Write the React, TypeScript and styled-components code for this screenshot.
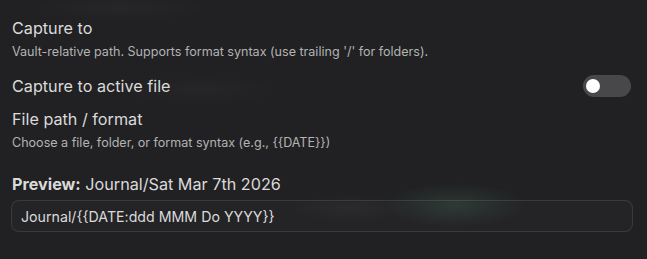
import React, { useState } from "react";
import styled, { createGlobalStyle } from "styled-components";

const Global = createGlobalStyle`
  html, body {
    margin: 0;
    padding: 0;
    background: #212123;
  }
  body {
    font-family: Inter, "Noto Sans", "Liberation Sans", sans-serif;
    -webkit-font-smoothing: antialiased;
  }
`;

const Page = styled.div`
  position: relative;
  width: 647px;
  height: 259px;
  overflow: hidden;
  background:
    radial-gradient(ellipse 70px 22px at 455px 205px, rgba(70, 110, 90, 0.28), rgba(70, 110, 90, 0) 100%),
    radial-gradient(ellipse 60px 14px at 350px 208px, rgba(255, 255, 255, 0.03), rgba(255, 255, 255, 0) 100%),
    radial-gradient(ellipse 80px 14px at 200px 90px, rgba(255, 255, 255, 0.025), rgba(255, 255, 255, 0) 100%),
    radial-gradient(ellipse 90px 14px at 120px 8px, rgba(255, 255, 255, 0.025), rgba(255, 255, 255, 0) 100%),
    #212123;
`;

const Content = styled.div`
  display: flex;
  flex-direction: column;
  padding: 18px 16px 0 12px;
`;

const Setting = styled.div<{ $gap?: number }>`
  display: flex;
  align-items: center;
  justify-content: space-between;
  margin-bottom: ${(p) => p.$gap ?? 0}px;
`;

const Info = styled.div`
  display: flex;
  flex-direction: column;
  gap: 5px;
`;

const Name = styled.div`
  font-size: 16.2px;
  line-height: 20px;
  color: #dadada;
`;

const Desc = styled.div`
  font-size: 12.55px;
  line-height: 18px;
  color: #b3b3b3;
`;

const Track = styled.button<{ $on: boolean }>`
  position: relative;
  width: 48px;
  height: 22px;
  border: none;
  padding: 0;
  border-radius: 11px;
  background: ${(p) => (p.$on ? "#7a5af5" : "#48484b")};
  cursor: pointer;
`;

const Knob = styled.span<{ $on: boolean }>`
  position: absolute;
  top: 4px;
  left: ${(p) => (p.$on ? "30px" : "3px")};
  width: 14px;
  height: 14px;
  border-radius: 50%;
  background: #ffffff;
`;

const Preview = styled.div`
  font-size: 16.2px;
  line-height: 20px;
  color: #dadada;
  margin: 0 0 6px 0;
`;

const Bold = styled.span`
  font-weight: 700;
`;

const Input = styled.input`
  box-sizing: border-box;
  width: 622px;
  margin-left: -1px;
  height: 32px;
  padding: 0 9px;
  border-radius: 8px;
  border: 1px solid rgba(255, 255, 255, 0.1);
  background: rgba(255, 255, 255, 0.015);
  color: #dadada;
  font-family: Inter, "Noto Sans", "Liberation Sans", sans-serif;
  font-size: 14.2px;
  outline: none;
`;

export default function App() {
  const [on, setOn] = useState(false);
  const [value, setValue] = useState("Journal/{{DATE:ddd MMM Do YYYY}}");
  return (
    <>
      <Global />
      <Page>
        <Content>
          <Setting $gap={14}>
            <Info>
              <Name>Capture to</Name>
              <Desc>Vault-relative path. Supports format syntax (use trailing '/' for folders).</Desc>
            </Info>
          </Setting>
          <Setting $gap={12}>
            <Info>
              <Name>Capture to active file</Name>
            </Info>
            <Track $on={on} onClick={() => setOn(!on)} aria-label="toggle">
              <Knob $on={on} />
            </Track>
          </Setting>
          <Setting $gap={22}>
            <Info>
              <Name>File path / format</Name>
              <Desc>Choose a file, folder, or format syntax (e.g., {"{{DATE}}"})</Desc>
            </Info>
          </Setting>
          <Preview>
            <Bold>Preview:</Bold> Journal/Sat Mar 7th 2026
          </Preview>
          <Input value={value} onChange={(e) => setValue(e.target.value)} />
        </Content>
      </Page>
    </>
  );
}
